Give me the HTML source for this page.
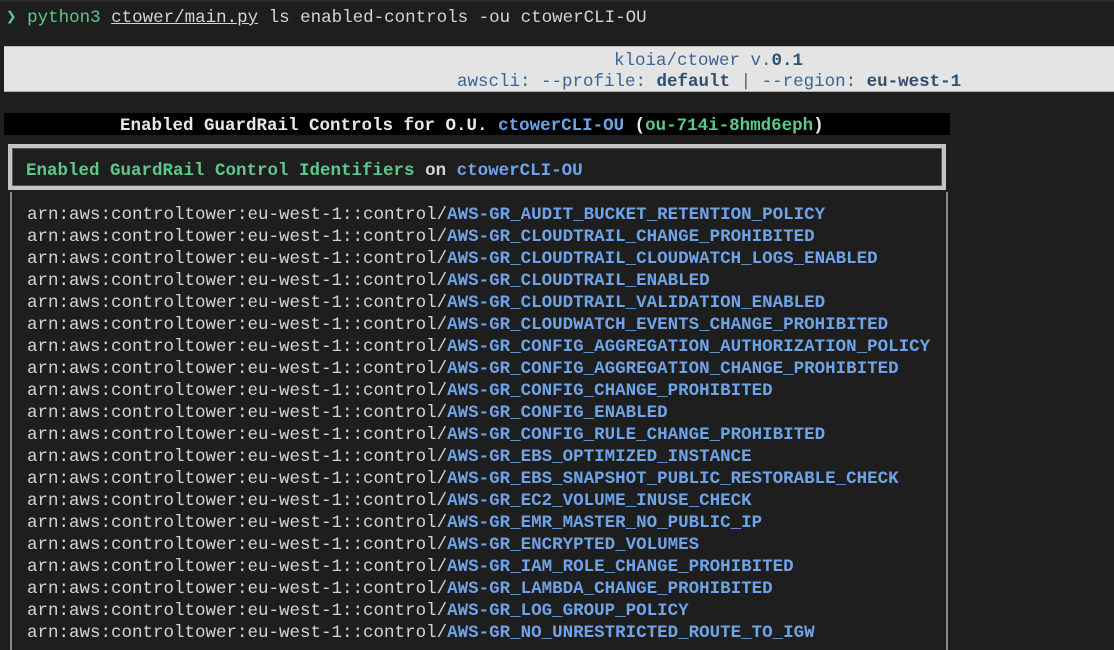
<!DOCTYPE html>
<html><head><meta charset="utf-8"><style>
html,body{margin:0;width:1114px;height:650px;overflow:hidden}
body{background:#1e1e1e;font-family:"Liberation Mono",monospace;font-size:17.5px;color:#d4d4d4;position:relative}
.a{position:absolute;white-space:pre;line-height:22px}
.b{font-weight:bold}
.bl{color:#6fa3e8}
.gr{color:#5cc98a}
</style></head><body>
<div style="position:absolute;left:0;top:0;width:1114px;height:2px;background:#2a2a2a"></div>
<div class="a" style="left:6px;top:7px"><span class="gr">❯</span> <span class="gr">python3</span> <u>ctower/main.py</u> ls enabled-controls -ou ctowerCLI-OU</div>
<div style="position:absolute;left:4px;top:46px;width:1110px;height:44px;background:#e4e4e4;border-top:1px solid #bbb;border-bottom:1px solid #aaa"></div>
<div class="a" style="left:614px;top:50px;color:#3d6490">kloia/ctower v.<span class="b" style="color:#2f4f6f">0.1</span></div>
<div class="a" style="left:457px;top:71px;color:#3d6490">awscli: --profile: <span class="b" style="color:#2f4f6f">default</span> | --region: <span class="b" style="color:#2f4f6f">eu-west-1</span></div>
<div style="position:absolute;left:4px;top:113px;width:946px;height:22px;background:#000"></div>
<div class="a b" style="left:120px;top:115px;color:#e8e8e8">Enabled GuardRail Controls for O.U. <span class="bl">ctowerCLI-OU</span> (<span class="gr">ou-714i-8hmd6eph</span>)</div>
<div style="position:absolute;left:8px;top:144px;width:930px;height:38px;border:4px solid #c4c4c4;box-shadow:inset 0 0 0 1px #555"></div>
<div class="a b" style="left:26px;top:160px"><span class="gr">Enabled GuardRail Control Identifiers</span> on <span class="bl">ctowerCLI-OU</span></div>
<div style="position:absolute;left:10px;top:192px;width:934px;height:458px;border-left:2px solid #8a8a8a;border-right:2px solid #8a8a8a"></div>
<div class="a" style="left:27px;top:204px">arn:aws:controltower:eu-west-1::control/<span class="b bl">AWS-GR_AUDIT_BUCKET_RETENTION_POLICY</span>
arn:aws:controltower:eu-west-1::control/<span class="b bl">AWS-GR_CLOUDTRAIL_CHANGE_PROHIBITED</span>
arn:aws:controltower:eu-west-1::control/<span class="b bl">AWS-GR_CLOUDTRAIL_CLOUDWATCH_LOGS_ENABLED</span>
arn:aws:controltower:eu-west-1::control/<span class="b bl">AWS-GR_CLOUDTRAIL_ENABLED</span>
arn:aws:controltower:eu-west-1::control/<span class="b bl">AWS-GR_CLOUDTRAIL_VALIDATION_ENABLED</span>
arn:aws:controltower:eu-west-1::control/<span class="b bl">AWS-GR_CLOUDWATCH_EVENTS_CHANGE_PROHIBITED</span>
arn:aws:controltower:eu-west-1::control/<span class="b bl">AWS-GR_CONFIG_AGGREGATION_AUTHORIZATION_POLICY</span>
arn:aws:controltower:eu-west-1::control/<span class="b bl">AWS-GR_CONFIG_AGGREGATION_CHANGE_PROHIBITED</span>
arn:aws:controltower:eu-west-1::control/<span class="b bl">AWS-GR_CONFIG_CHANGE_PROHIBITED</span>
arn:aws:controltower:eu-west-1::control/<span class="b bl">AWS-GR_CONFIG_ENABLED</span>
arn:aws:controltower:eu-west-1::control/<span class="b bl">AWS-GR_CONFIG_RULE_CHANGE_PROHIBITED</span>
arn:aws:controltower:eu-west-1::control/<span class="b bl">AWS-GR_EBS_OPTIMIZED_INSTANCE</span>
arn:aws:controltower:eu-west-1::control/<span class="b bl">AWS-GR_EBS_SNAPSHOT_PUBLIC_RESTORABLE_CHECK</span>
arn:aws:controltower:eu-west-1::control/<span class="b bl">AWS-GR_EC2_VOLUME_INUSE_CHECK</span>
arn:aws:controltower:eu-west-1::control/<span class="b bl">AWS-GR_EMR_MASTER_NO_PUBLIC_IP</span>
arn:aws:controltower:eu-west-1::control/<span class="b bl">AWS-GR_ENCRYPTED_VOLUMES</span>
arn:aws:controltower:eu-west-1::control/<span class="b bl">AWS-GR_IAM_ROLE_CHANGE_PROHIBITED</span>
arn:aws:controltower:eu-west-1::control/<span class="b bl">AWS-GR_LAMBDA_CHANGE_PROHIBITED</span>
arn:aws:controltower:eu-west-1::control/<span class="b bl">AWS-GR_LOG_GROUP_POLICY</span>
arn:aws:controltower:eu-west-1::control/<span class="b bl">AWS-GR_NO_UNRESTRICTED_ROUTE_TO_IGW</span></div>
</body></html>
